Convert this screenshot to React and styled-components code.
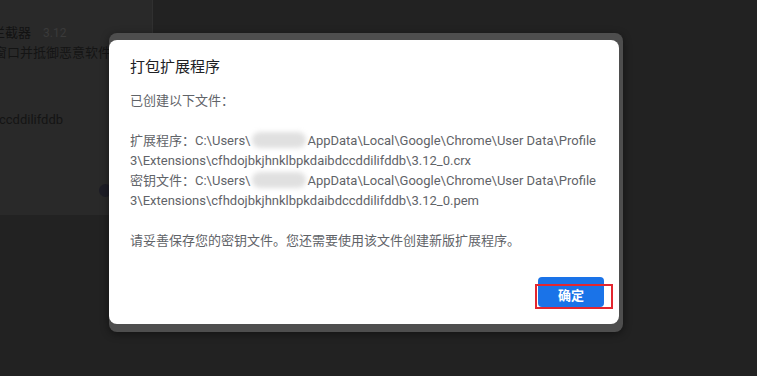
import React from "react";
import styled, { createGlobalStyle } from "styled-components";

const GlobalStyle = createGlobalStyle`
  html, body {
    margin: 0;
    padding: 0;
    background: #222222;
    overflow: hidden;
  }
  body {
    font-family: Roboto, "Noto Sans CJK SC", "Liberation Sans", sans-serif;
  }
`;

const Page = styled.div`
  position: relative;
  width: 757px;
  height: 376px;
  background: #222222;
  overflow: hidden;
`;

const BackCard = styled.div`
  width: 153px;
  height: 215px;
  background: #292929;
  border-right: 1px solid #303030;
  display: flex;
  flex-direction: column;
  padding: 24px 0 0 0;
  box-sizing: border-box;
  overflow: hidden;
  position: relative;
`;

const BackTitle = styled.div`
  display: flex;
  align-items: baseline;
  gap: 12px;
  margin-left: -8px;
  font-size: 13px;
  line-height: 18px;
  color: #121212;
  white-space: nowrap;
`;

const BackVersion = styled.span`
  color: #3a3a3a;
  font-size: 12px;
`;

const BackLine = styled.div`
  margin-left: ${(p) => p.$shift || 0}px;
  margin-top: ${(p) => p.$top || 0}px;
  font-size: 13px;
  line-height: 18px;
  color: #141414;
  white-space: nowrap;
`;

const Dot = styled.div`
  position: absolute;
  left: 99px;
  top: 184px;
  width: 13px;
  height: 13px;
  border-radius: 50%;
  background: #1d1d26;
`;

const Overlay = styled.div`
  position: absolute;
  left: 109px;
  top: 33px;
`;

const Frame = styled.div`
  width: 512px;
  background: #4e4e4e;
  border-radius: 8px;
  padding: 7px 2px 8px 0;
  box-shadow: 0 2px 8px rgba(0, 0, 0, 0.45);
`;

const Dialog = styled.div`
  width: 510px;
  height: 284px;
  box-sizing: border-box;
  background: #ffffff;
  border-radius: 8px;
  padding: 17px 20px 17px 21px;
  display: flex;
  flex-direction: column;
`;

const Title = styled.div`
  font-size: 15px;
  line-height: 20px;
  color: #202124;
`;

const Body = styled.div`
  margin-top: ${(p) => p.$top}px;
  font-size: 13px;
  line-height: 20px;
  color: #5f6368;
  white-space: nowrap;
`;

const Redacted = styled.span`
  display: inline-block;
  width: 54px;
  height: 16px;
  margin: 0 1px -3px 2px;
  background: #e0e0e0;
  border-radius: 8px;
  filter: blur(2.5px);
`;

const Footer = styled.div`
  margin-top: auto;
  margin-right: -5px;
  display: flex;
  justify-content: flex-end;
`;

const ButtonWrap = styled.div`
  position: relative;
`;

const OkButton = styled.button`
  width: 66px;
  height: 30px;
  border: none;
  border-radius: 4px;
  background: #1a73e8;
  color: #ffffff;
  font-family: inherit;
  font-size: 13px;
  font-weight: bold;
  padding: 4px 0 0;
  cursor: pointer;
`;

const Highlight = styled.div`
  position: absolute;
  left: -3px;
  top: 7px;
  width: 78px;
  height: 25px;
  box-sizing: border-box;
  border: 2px solid #e3262f;
`;

export default function App() {
  return (
    <Page>
      <GlobalStyle />
      <BackCard>
        <BackTitle>
          拦截器 <BackVersion>3.12</BackVersion>
        </BackTitle>
        <BackLine $shift={-6} $top={2}>
          窗口并抵御恶意软件的侵害
        </BackLine>
        <BackLine $shift={-1} $top={49}>
          ccddilifddb
        </BackLine>
        <Dot />
      </BackCard>
      <Overlay>
        <Frame>
          <Dialog>
            <Title>打包扩展程序</Title>
            <Body $top={14}>已创建以下文件：</Body>
            <Body $top={20}>
              扩展程序：C:\Users\<Redacted />AppData\Local\Google\Chrome\User Data\Profile
              <br />
              3\Extensions\cfhdojbkjhnklbpkdaibdccddilifddb\3.12_0.crx
              <br />
              密钥文件：C:\Users\<Redacted />AppData\Local\Google\Chrome\User Data\Profile
              <br />
              3\Extensions\cfhdojbkjhnklbpkdaibdccddilifddb\3.12_0.pem
            </Body>
            <Body $top={20}>请妥善保存您的密钥文件。您还需要使用该文件创建新版扩展程序。</Body>
            <Footer>
              <ButtonWrap>
                <OkButton>确定</OkButton>
                <Highlight />
              </ButtonWrap>
            </Footer>
          </Dialog>
        </Frame>
      </Overlay>
    </Page>
  );
}
